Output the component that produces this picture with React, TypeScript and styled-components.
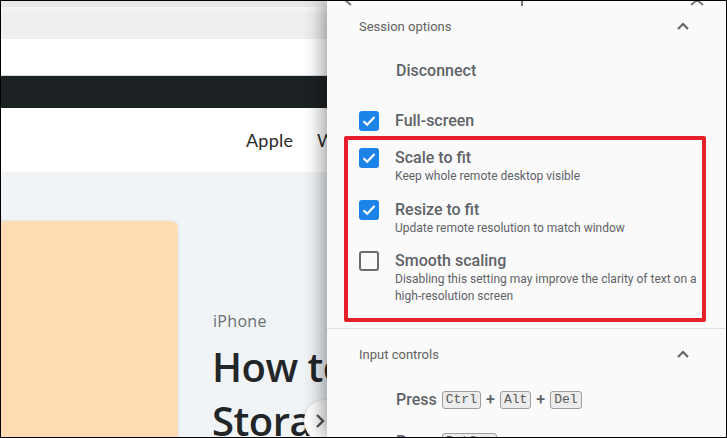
import * as React from "react";
import styled, { createGlobalStyle } from "styled-components";

const GlobalStyle = createGlobalStyle`
  html, body {
    margin: 0;
    padding: 0;
    background: #fff;
  }
`;

const Frame = styled.div`
  position: relative;
  width: 727px;
  height: 438px;
  box-sizing: border-box;
  border: 1px solid #000;
  overflow: hidden;
  display: flex;
`;

/* ---------- remote web page behind the drawer ---------- */

const Page = styled.div`
  position: relative;
  flex: 0 0 326px;
  overflow: hidden;
  background: #f0f4f6;
`;

const Site = styled.div`
  width: 760px;
  display: flex;
  flex-direction: column;
`;

const Band = styled.div<{ h: number; bg: string; line?: boolean }>`
  height: ${(p) => p.h}px;
  background: ${(p) => p.bg};
  border-bottom: ${(p) => (p.line ? "1px solid #d6d9db" : "none")};
  flex: 0 0 auto;
`;

const NavBar = styled.nav`
  height: 64px;
  background: #fff;
  display: flex;
  align-items: center;
  gap: 24px;
  padding-left: 245px;
  font-family: Lato, "Open Sans", sans-serif;
  font-size: 18px;
  color: #2a2a2a;
  letter-spacing: 0.2px;
`;

const Hero = styled.div`
  display: flex;
  gap: 35px;
  padding-top: 49px;
`;

const Thumb = styled.div`
  width: 177px;
  height: 240px;
  background: #fddcb4;
  border-radius: 0 7px 0 0;
  box-shadow: 0 0 0 2px #e9eef1;
  flex: 0 0 auto;
`;

const Story = styled.div`
  padding-top: 89px;
  font-family: "Open Sans", "Noto Sans", sans-serif;
`;

const Kicker = styled.div`
  font-size: 16px;
  color: #6b6f72;
  letter-spacing: 0.3px;
  line-height: 22px;
`;

const Headline = styled.h1`
  margin: 8px 0 0 -1px;
  width: 330px;
  font-size: 40px;
  line-height: 54px;
  font-weight: 600;
  color: #232629;
  letter-spacing: -0.5px;
`;

const NextButton = styled.div`
  position: absolute;
  left: 303px;
  top: 399px;
  width: 42px;
  height: 42px;
  border-radius: 50%;
  background: #fff;
  box-shadow: 0 1px 4px rgba(0, 0, 0, 0.2);
  display: flex;
  align-items: center;
  justify-content: center;
  padding-right: 10px;
  box-sizing: border-box;
  color: #555;
`;

/* ---------- Chrome Remote Desktop side drawer ---------- */

const Drawer = styled.aside`
  position: relative;
  z-index: 2;
  flex: 1 1 auto;
  overflow: hidden;
  background: #fafafa;
  box-shadow: -4px 0 18px rgba(0, 0, 0, 0.4);
  font-family: Roboto, "Liberation Sans", sans-serif;
  color: #5f6368;
  display: flex;
  flex-direction: column;

  > * {
    flex-shrink: 0;
  }
`;

const ToolbarStub = styled.div`
  height: 5px;
  overflow: hidden;
  display: flex;
  align-items: flex-end;
  padding: 0 22px 0 16px;
  justify-content: space-between;
  color: #777;
`;

const SectionHeader = styled.div<{ h: number }>`
  height: ${(p) => p.h}px;
  display: flex;
  align-items: center;
  justify-content: space-between;
  padding: 0 37px 0 32px;
  font-size: 13px;
  color: #616161;
`;

const SectionBody = styled.div<{ pb: number }>`
  padding: 0 0 ${(p) => p.pb}px 32px;
  display: flex;
  flex-direction: column;
`;

const Divider = styled.hr`
  margin: 0;
  border: 0;
  border-top: 1px solid #e0e0e0;
`;

const Action = styled.div<{ mt: number }>`
  margin: ${(p) => p.mt}px 0 0 37px;
  font-size: 16px;
  font-weight: 500;
  line-height: 20px;
  color: #5f6368;
`;

const Option = styled.label<{ mt?: number }>`
  margin-top: ${(p) => p.mt ?? 0}px;
  display: grid;
  grid-template-columns: 20px 1fr;
  column-gap: 16px;
  align-items: start;
`;

const Box = styled.span<{ checked: boolean }>`
  width: 20px;
  height: 20px;
  box-sizing: border-box;
  border-radius: 3px;
  background: ${(p) => (p.checked ? "#1b84e6" : "transparent")};
  border: ${(p) => (p.checked ? "none" : "2px solid #6b6b6b")};
  display: flex;
  align-items: center;
  justify-content: center;
`;

const OptionTitle = styled.div`
  font-size: 16px;
  font-weight: 500;
  line-height: 20px;
  color: #5f6368;
`;

const OptionHint = styled.div`
  font-size: 12px;
  line-height: 17px;
  color: #5f6368;
  padding-right: 22px;
`;

const Highlight = styled.div`
  position: relative;
  margin-top: 17px;
  display: flex;
  flex-direction: column;
  gap: 14.5px;

  &::after {
    content: "";
    position: absolute;
    top: -12px;
    bottom: -17px;
    left: -15px;
    right: 20px;
    border: 4px solid #e5202b;
    border-radius: 2px;
    pointer-events: none;
  }
`;

const KeyRow = styled.div<{ mt: number }>`
  margin: ${(p) => p.mt}px 0 0 37px;
  display: flex;
  align-items: center;
  gap: 5px;
  font-size: 16px;
  font-weight: 500;
  line-height: 20px;
  color: #5f6368;
`;

const Kbd = styled.kbd`
  font-family: "Liberation Mono", "DejaVu Sans Mono", monospace;
  font-size: 13px;
  line-height: 14px;
  padding: 1px 3px;
  color: #5a5a5a;
  background: #ececec;
  border: 1px solid #9e9e9e;
  border-radius: 3px;
`;

const Chevron = ({ dir }: { dir: "up" | "right" }) =>
  dir === "up" ? (
    <svg width="12" height="8" viewBox="0 0 12 8">
      <path d="M1 7 L6 2 L11 7" fill="none" stroke="#5f6368" strokeWidth="2" />
    </svg>
  ) : (
    <svg width="10" height="16" viewBox="0 0 10 16">
      <path d="M2 2 L8 8 L2 14" fill="none" stroke="#555" strokeWidth="2.4" />
    </svg>
  );

const Tick = () => (
  <svg width="14" height="12" viewBox="0 0 14 12">
    <path d="M1.5 6.2 L5.2 9.8 L12.5 2" fill="none" stroke="#fff" strokeWidth="2.2" />
  </svg>
);

interface IOption {
  title: string;
  hint?: string;
  checked: boolean;
}

const displayOptions: IOption[] = [
  { title: "Scale to fit", hint: "Keep whole remote desktop visible", checked: true },
  { title: "Resize to fit", hint: "Update remote resolution to match window", checked: true },
  {
    title: "Smooth scaling",
    hint: "Disabling this setting may improve the clarity of text on a high-resolution screen",
    checked: false,
  },
];

const OptionItem = ({ title, hint, checked, mt }: IOption & { mt?: number }) => (
  <Option mt={mt}>
    <Box checked={checked}>{checked && <Tick />}</Box>
    <div>
      <OptionTitle>{title}</OptionTitle>
      {hint && <OptionHint>{hint}</OptionHint>}
    </div>
  </Option>
);

export default function App() {
  return (
    <>
      <GlobalStyle />
      <Frame>
        <Page>
          <Site>
            <Band h={6} bg="#e6e8e8" />
            <Band h={4} bg="#f3f4f4" />
            <Band h={28} bg="#eef0f0" />
            <Band h={36} bg="#ffffff" line />
            <Band h={32} bg="#1c2123" />
            <NavBar>
              <span>Apple</span>
              <span>Windows</span>
              <span>Android</span>
            </NavBar>
            <Hero>
              <Thumb />
              <Story>
                <Kicker>iPhone</Kicker>
                <Headline>How to Free Up Storage on iPhone</Headline>
              </Story>
            </Hero>
          </Site>
          <NextButton>
            <Chevron dir="right" />
          </NextButton>
        </Page>

        <Drawer>
          <ToolbarStub>
            <svg width="10" height="12" viewBox="0 0 10 12">
              <path d="M8 1 L2 6 L8 11" fill="none" stroke="#777" strokeWidth="2" />
            </svg>
            <svg width="4" height="12" viewBox="0 0 4 12">
              <rect x="1" y="0" width="2" height="12" fill="#777" />
            </svg>
            <svg width="14" height="12" viewBox="0 0 14 12">
              <path d="M1 1 L13 11 M13 1 L1 11" fill="none" stroke="#777" strokeWidth="2" />
            </svg>
          </ToolbarStub>

          <SectionHeader h={40}>
            <span>Session options</span>
            <Chevron dir="up" />
          </SectionHeader>
          <SectionBody pb={23}>
            <Action mt={15}>Disconnect</Action>
            <OptionItem title="Full-screen" checked mt={30} />
            <Highlight>
              {displayOptions.map((o) => (
                <OptionItem key={o.title} {...o} />
              ))}
            </Highlight>
          </SectionBody>
          <Divider />

          <SectionHeader h={50}>
            <span>Input controls</span>
            <Chevron dir="up" />
          </SectionHeader>
          <SectionBody pb={0}>
            <KeyRow mt={11}>
              Press <Kbd>Ctrl</Kbd>+<Kbd>Alt</Kbd>+<Kbd>Del</Kbd>
            </KeyRow>
            <KeyRow mt={22}>
              Press <Kbd>PrtScn</Kbd>
            </KeyRow>
          </SectionBody>
        </Drawer>
      </Frame>
    </>
  );
}
